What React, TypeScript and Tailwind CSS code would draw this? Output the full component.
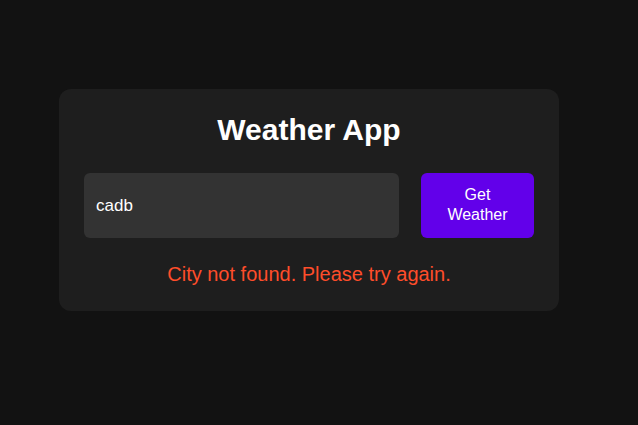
import React, { useState } from "react";

const App: React.FC = () => {
  const [city, setCity] = useState<string>("cadb");
  const [error] = useState<string>("City not found. Please try again.");

  return (
    <div
      className="min-h-screen w-full bg-[#121212] pt-[89px] pl-[59px]"
      style={{ fontFamily: '"Liberation Sans", Arial, sans-serif' }}
    >
      <div className="w-[500px] rounded-xl bg-[#1e1e1e] px-[25px] pt-[23px] pb-[23px] text-center">
        <h1 className="text-[30px] font-bold leading-[36px] text-white">Weather App</h1>

        <div className="mt-[25px] flex items-stretch gap-[22px]">
          <input
            type="text"
            value={city}
            onChange={(e) => setCity(e.target.value)}
            className="h-[65px] flex-1 rounded-md bg-[#333333] px-3 text-[17px] text-white outline-none"
          />
          <button className="h-[65px] w-[113px] rounded-md bg-[#6200ea] px-4 pb-[2px] text-[16px] leading-[20px] text-white">
            Get Weather
          </button>
        </div>

        {error && (
          <p className="mt-[22px] text-[20px] leading-[28px] text-[#ff4d2a]">{error}</p>
        )}
      </div>
    </div>
  );
};

export default App;
